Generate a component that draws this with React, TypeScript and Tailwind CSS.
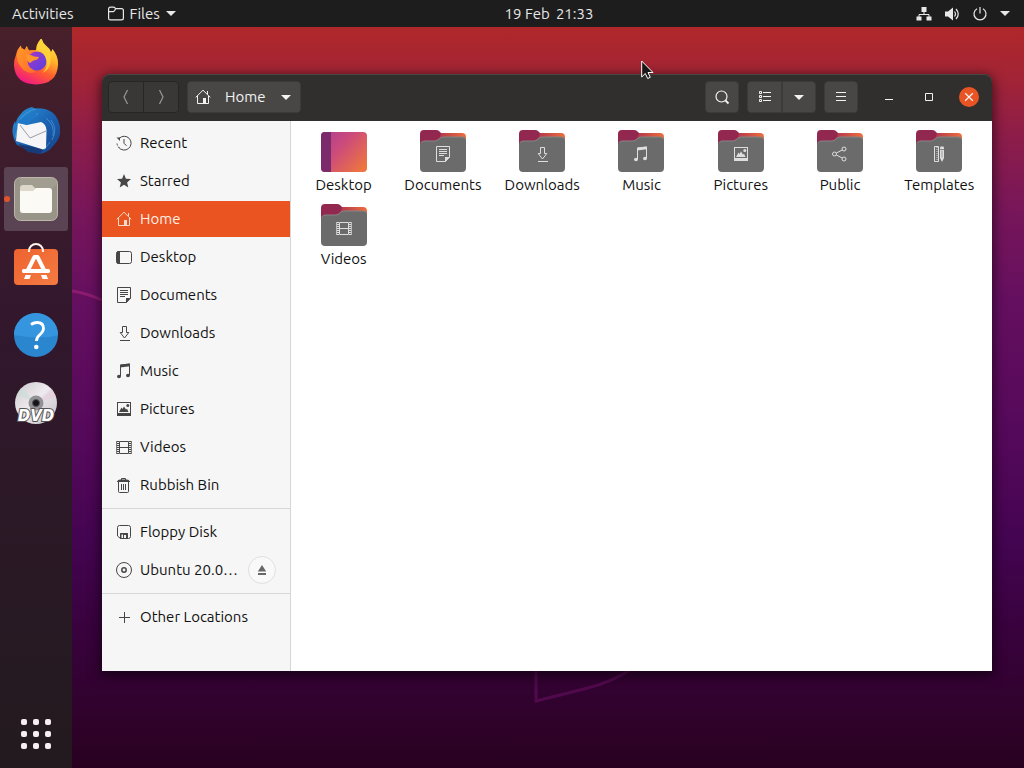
import React from "react";

type IconProps = { className?: string };

const stroke = {
  fill: "none",
  stroke: "currentColor",
  strokeWidth: 1,
} as const;

function Svg({ children, className = "h-4 w-4" }: { children: React.ReactNode; className?: string }) {
  return (
    <svg viewBox="0 0 16 16" className={`${className} shrink-0`} aria-hidden="true">
      {children}
    </svg>
  );
}

const RecentIcon = (p: IconProps) => (
  <Svg {...p}>
    <path {...stroke} d="M3.2 3.4A6.9 6.9 0 1 1 2.6 12.2" />
    <path {...stroke} strokeDasharray="2 1.5" d="M1 8.500a6.900 6.900 0 0 0 2.300 4.500" />
    <path {...stroke} d="M8 4v4.300l2.500 2.500" />
    <path fill="currentColor" d="M.5 2.500h3.500v3.500z" />
  </Svg>
);
const StarIcon = (p: IconProps) => (
  <Svg {...p}>
    <path fill="currentColor" d="M8 1l1.900 4.700 5.100.4-3.900 3.300 1.200 5L8 11.700l-4.300 2.700 1.200-5L1 6.100l5.100-.4z" />
  </Svg>
);
const HomeIcon = (p: IconProps) => (
  <Svg {...p}>
    <path {...stroke} d="M.7 8.400L8 1.200l7.300 7.200M2.500 7v7.500h11V7M12.500 5V2" />
    <path fill="currentColor" d="M8 9h3v6H8z" />
  </Svg>
);
const DesktopIcon = (p: IconProps) => (
  <Svg {...p}>
    <rect {...stroke} x=".5" y="2.500" width="15" height="12" rx="2" />
    <path fill="currentColor" d="M2.500 2H4v13H2.500a2 2 0 0 1-2-2V4a2 2 0 0 1 2-2z" />
  </Svg>
);
const DocumentIcon = (p: IconProps) => (
  <Svg {...p}>
    <path {...stroke} d="M1.500.5h13v10.500l-4 4.500h-9zM4 3.500h8M4 5.500h8M4 7.500h8M4 9.500h5" />
    <path fill="currentColor" d="M10 11h5l-5 5z" />
  </Svg>
);
const DownloadIcon = (p: IconProps) => (
  <Svg {...p}>
    <path {...stroke} d="M6.500 1.500h4v6h2.300L8.500 13 4.200 7.500h2.300zM4 15.500h10" />
  </Svg>
);
const MusicIcon = (p: IconProps) => (
  <Svg {...p}>
    <path {...stroke} d="M4.500 13V2l9-1V12" />
    <path fill="currentColor" d="M4 1.800L14 .5v2.800L4 4.600z" />
    <ellipse cx="3" cy="13.500" rx="2" ry="1.700" fill="currentColor" />
    <ellipse cx="12" cy="12.500" rx="2" ry="1.700" fill="currentColor" />
  </Svg>
);
const PictureIcon = (p: IconProps) => (
  <Svg {...p}>
    <rect {...stroke} x="1.500" y="1.500" width="13" height="13" />
    <path fill="currentColor" d="M1 12h14v3H1zM3 11l2.500-4.500 1 1.500L8 5.500l2 3 1-.8 1.500 3.300z" />
    <circle cx="11.800" cy="4.500" r="1.500" fill="currentColor" />
  </Svg>
);
const VideoIcon = (p: IconProps) => (
  <Svg {...p}>
    <path {...stroke} d="M3.500 2.500h9v12h-9zM3.500 8.500h9" />
    <path {...stroke} strokeWidth="2" strokeDasharray="1 1" d="M2 2v13M14 2v13" />
    <path {...stroke} strokeWidth=".8" d="M.6 2v13M15.400 2v13" />
  </Svg>
);
const TrashIcon = (p: IconProps) => (
  <Svg {...p}>
    <path {...stroke} d="M2.500 5v9.500a1 1 0 0 0 1 1h8a1 1 0 0 0 1-1V5M5.500 7v6M7.500 7v6M9.500 7v6M5.500 3V1.500h4V3" />
    <path fill="currentColor" d="M1 4.500Q2 2.500 4 2.500h7q2 0 3 2v.5H1z" />
  </Svg>
);
const FloppyIcon = (p: IconProps) => (
  <Svg {...p}>
    <path {...stroke} d="M3.500 1.500h9a2 2 0 0 1 2 2v9a2 2 0 0 1-2 2h-8l-3-2.500V3.500a2 2 0 0 1 2-2z" />
    <path fill="currentColor" d="M4 15V9.500Q4 9 4.500 9h7q.5 0 .5.500V15h-2v-4H8v4H7v-4.500H5.500V15z" />
  </Svg>
);
const DiscIcon = (p: IconProps) => (
  <Svg {...p}>
    <circle {...stroke} cx="8" cy="8" r="7.500" />
    <circle {...stroke} strokeWidth="1.500" cx="8" cy="8" r="2.200" />
  </Svg>
);
const PlusIcon = (p: IconProps) => (
  <Svg {...p}>
    <path {...stroke} d="M8.500 3v11M3 8.500h11" />
  </Svg>
);
const EjectIcon = (p: IconProps) => (
  <Svg {...p}>
    <path fill="currentColor" d="M8 3l4.200 6.500H3.800zM4 11h8v2H4z" />
  </Svg>
);
const ShareIcon = (p: IconProps) => (
  <Svg {...p}>
    <path {...stroke} d="M4.300 7l6-3M4.300 9l6 3" />
    <circle {...stroke} cx="2.500" cy="8" r="2" />
    <circle {...stroke} cx="12" cy="3" r="2" />
    <circle {...stroke} cx="12" cy="13" r="2" />
  </Svg>
);
const TemplateIcon = (p: IconProps) => (
  <Svg {...p}>
    <path {...stroke} d="M3.500.5h4v15h-4z" />
    <path {...stroke} strokeDasharray="1 1" d="M6 1v14" />
    <path fill="currentColor" d="M9 2l.5-1.500h3L13 2v1.200H9zM9 4h4v8l-2 4-2-4z" />
    <path stroke="#6b6b6b" strokeWidth=".6" d="M11 4.500v7" />
  </Svg>
);
const CaretIcon = ({ className = "h-[5px] w-2.5" }: IconProps) => (
  <svg viewBox="0 0 10 5" className={`${className} shrink-0`} aria-hidden="true">
    <path fill="currentColor" d="M0 0h10L5 5z" />
  </svg>
);

function Firefox() {
  return (
    <svg viewBox="0 0 48 48" className="h-12 w-12" aria-hidden="true">
      <defs>
        <linearGradient id="ffBody" x1=".8" y1="0" x2=".3" y2="1">
          <stop offset="0" stopColor="#fff04a" />
          <stop offset=".35" stopColor="#ffb52a" />
          <stop offset=".65" stopColor="#ff5c2f" />
          <stop offset="1" stopColor="#f01787" />
        </linearGradient>
        <linearGradient id="ffGlobe" x1="0" y1="0" x2="1" y2="1">
          <stop offset="0" stopColor="#a038c8" />
          <stop offset="1" stopColor="#5a3fe0" />
        </linearGradient>
        <linearGradient id="ffHead" x1="0" y1="0" x2="1" y2="1">
          <stop offset="0" stopColor="#ff9a28" />
          <stop offset="1" stopColor="#ff6b2d" />
        </linearGradient>
      </defs>
      <path
        fill="url(#ffBody)"
        d="M4 16Q5 10 9 6.500l1 5 3-1L14.500 7l2.500 4.500 7-.5q0-6 5.500-12 1 5 5 8 3.500 2.500 4.500 6l1.500-3q6 7 5.500 16-1 19-22 19.500Q3.500 45 2 27q-.3-6 2-11z"
      />
      <path
        fill="url(#ffHead)"
        d="M5 14l5-5 3 2 2-3.500 2 4.500q4-2 7 0l-5 8q-2 9 5 13-9 3-15-5-5-5-4-14z"
      />
      <circle cx="25" cy="22" r="9.500" fill="url(#ffGlobe)" />
      <path fill="#ff9629" d="M14 16q5-1 8 1.500l5 .5q-1 3-5.500 3.500L18 24q-4-2-4-8z" />
      <path fill="#ffd43b" d="M25 11q0-6 4.500-11 1 5 5 8 6 5 4 15-1 8-8 11 6-6 3.500-14-2-7-9-9z" opacity=".8" />
    </svg>
  );
}

function Thunderbird() {
  return (
    <svg viewBox="0 0 48 48" className="h-12 w-12" aria-hidden="true">
      <defs>
        <linearGradient id="tbBody" x1="0" y1="0" x2="1" y2="1">
          <stop offset="0" stopColor="#2a94d8" />
          <stop offset=".5" stopColor="#1c64b4" />
          <stop offset="1" stopColor="#173f87" />
        </linearGradient>
      </defs>
      <path
        fill="url(#tbBody)"
        d="M8 8Q13 1 20 0l3 1.500Q40 0 46 13q6 15-4 25-6 8-14 9L5 38Q-3 25 3 14l1 3q0-5 4-9z"
      />
      <path fill="none" stroke="#5cb7ec" opacity=".5" d="M5 16Q15 3 24 2M15 9l-5 10M26 6l-6 6M39 13q7 9 1 20M34 11q9 7 7 18M32 43l6-8M5 23l-2 8" />
      <path fill="#173b78" d="M6 37l26 5-4 5-12-2z" />
      <path fill="#f5f5f7" d="M6 15l9 3 14-3q5 2 5.500 8L34 41l-3 1.500L4 34z" />
      <path fill="none" stroke="#85888e" strokeWidth=".8" d="M8 18l10 13 16-7" />
      <path fill="#2078c8" d="M5 16Q13 5 28 9q-9 2-13 9-5-1-10-2z" />
    </svg>
  );
}

function FilesApp() {
  return (
    <svg viewBox="0 0 48 48" className="h-12 w-12" aria-hidden="true">
      <rect x="2.500" y="2.500" width="43" height="43" rx="6" fill="#999488" stroke="#bfb8aa" />
      <path fill="#aaa599" d="M8 3h32q5 0 5 6L8 40z" opacity=".5" />
      <path fill="#ddd7ca" d="M8 13q0-3 3-3h9l4 4h13q3 0 3 3v18H8z" />
      <path fill="#fbfaf4" d="M8 16h13l3-3h13q3 0 3 3v19q0 3-3 3H11q-3 0-3-3z" />
    </svg>
  );
}

function SoftwareApp() {
  return (
    <svg viewBox="0 0 48 48" className="h-12 w-12" aria-hidden="true">
      <defs>
        <linearGradient id="bag" x1="0" y1="0" x2="1" y2="1">
          <stop offset="0" stopColor="#ee632f" />
          <stop offset="1" stopColor="#f47b43" />
        </linearGradient>
      </defs>
      <rect x="2" y="6" width="44" height="36" rx="4" fill="url(#bag)" />
      <path fill="none" stroke="#fff4ec" strokeWidth="2" d="M17 9V8a7 7 0 0 1 14 0v1" />
      <path fill="none" stroke="#fff" strokeWidth="4" strokeLinejoin="round" d="M15.500 28l7-14h3l7 14" />
      <rect x="10" y="26" width="28" height="4" rx="1.500" fill="#fff" />
      <path fill="#fff" d="M13.500 32h5.500l-1.500 4h-5.500zM29 32h5.500l1.500 4h-5.500z" />
    </svg>
  );
}

function HelpApp() {
  return (
    <svg viewBox="0 0 48 48" className="h-12 w-12" aria-hidden="true">
      <circle cx="24" cy="24" r="22" fill="#2b86d0" />
      <path fill="#3595de" d="M2 24a22 22 0 0 1 44 0Q30 29 2 24z" />
      <path fill="none" stroke="#fff" strokeWidth="2.800" d="M19 13.500q3-2 6-2 6.500 0 6.500 6 0 3-3.500 6T24.500 30" />
      <circle cx="24.300" cy="36" r="2.300" fill="#fff" />
    </svg>
  );
}

function DvdApp() {
  return (
    <svg viewBox="0 0 48 48" className="h-12 w-12" aria-hidden="true">
      <defs>
        <linearGradient id="dvd" x1="0" y1="0" x2="1" y2="1">
          <stop offset="0" stopColor="#c9c9cb" />
          <stop offset=".45" stopColor="#eee9ee" />
          <stop offset="1" stopColor="#bfc0c4" />
        </linearGradient>
      </defs>
      <circle cx="24" cy="24" r="21" fill="url(#dvd)" />
      <path fill="#c8ddd8" d="M24 24L5 15l4-6z" opacity=".6" />
      <path fill="#e6c9dc" d="M24 24L40 10l4 8z" opacity=".6" />
      <circle cx="24" cy="24" r="7.500" fill="#929295" />
      <circle cx="24" cy="24" r="3.500" fill="#151316" stroke="#55555a" />
      <text
        x="24"
        y="42"
        textAnchor="middle"
        fontFamily="DejaVu Sans, sans-serif"
        fontSize="15"
        fontWeight="bold"
        fontStyle="italic"
        fill="#fff"
        stroke="#555"
        strokeWidth="2"
        paintOrder="stroke"
      >
        DVD
      </text>
    </svg>
  );
}

const apps = [
  { name: "Firefox", icon: Firefox },
  { name: "Thunderbird", icon: Thunderbird },
  { name: "Files", icon: FilesApp, active: true },
  { name: "Software", icon: SoftwareApp },
  { name: "Help", icon: HelpApp },
  { name: "Disc", icon: DvdApp },
];

const places = [
  { name: "Recent", icon: RecentIcon },
  { name: "Starred", icon: StarIcon },
  { name: "Home", icon: HomeIcon, selected: true },
  { name: "Desktop", icon: DesktopIcon },
  { name: "Documents", icon: DocumentIcon },
  { name: "Downloads", icon: DownloadIcon },
  { name: "Music", icon: MusicIcon },
  { name: "Pictures", icon: PictureIcon },
  { name: "Videos", icon: VideoIcon },
  { name: "Rubbish Bin", icon: TrashIcon },
];

const folders: { name: string; icon?: (p: IconProps) => React.ReactElement }[] = [
  { name: "Desktop" },
  { name: "Documents", icon: DocumentIcon },
  { name: "Downloads", icon: DownloadIcon },
  { name: "Music", icon: MusicIcon },
  { name: "Pictures", icon: PictureIcon },
  { name: "Public", icon: ShareIcon },
  { name: "Templates", icon: TemplateIcon },
  { name: "Videos", icon: VideoIcon },
];

function FolderArt({ icon: Icon }: { icon?: (p: IconProps) => React.ReactElement }) {
  if (!Icon) {
    return (
      <svg viewBox="0 0 48 48" className="h-12 w-12" aria-hidden="true">
        <defs>
          <linearGradient id="desk" x1="0" y1="0" x2="1" y2=".8">
            <stop offset="0" stopColor="#ad3b92" />
            <stop offset=".45" stopColor="#cc4c7a" />
            <stop offset="1" stopColor="#ee7440" />
          </linearGradient>
        </defs>
        <rect x="1" y="4" width="46" height="40" rx="4" fill="url(#desk)" />
        <path fill="#7b2b6b" d="M5 4h6v40H5a4 4 0 0 1-4-4V8a4 4 0 0 1 4-4z" />
      </svg>
    );
  }
  return (
    <span className="grid h-12 w-12 place-items-center">
      <svg viewBox="0 0 48 48" className="col-start-1 row-start-1 h-12 w-12" aria-hidden="true">
        <defs>
          <linearGradient id="tab" x1="0" y1="0" x2="1" y2="0">
            <stop offset="0" stopColor="#932a55" />
            <stop offset=".45" stopColor="#b53a4c" />
            <stop offset="1" stopColor="#ee6e3c" />
          </linearGradient>
        </defs>
        <path fill="url(#tab)" d="M1 20V9q0-4 4-4h38q4 0 4 4v11z" />
        <path fill="#922750" d="M1 20V6q0-4 4-4h12q2 0 3 1l2 2q-1 6-5 7z" />
        <path fill="#6b6b6b" d="M1 17q0-4 4-4h11q2 0 4-2t4-2h19q4 0 4 4v27q0 4-4 4H5q-4 0-4-4z" />
        <path fill="none" stroke="#858585" d="M2 15q1-2 3-2h11q2 0 4-2t4-2h19q3 0 3.500 2" />
      </svg>
      <span className="col-start-1 row-start-1 pt-1 text-[#dedede]">
        <Icon />
      </span>
    </span>
  );
}

function TopBar() {
  return (
    <header className="grid h-[27px] shrink-0 grid-cols-[1fr_auto_1fr] items-center bg-[#1d1d1d] text-[15px] leading-5 text-[#e8e8e8]">
      <div className="flex items-center gap-[34px] pl-3">
        <button type="button">Activities</button>
        <button type="button" className="flex items-center gap-1.5">
          <Svg>
            <path {...stroke} strokeWidth="1.200" d="M.6 4V3q0-1.900 1.900-1.900h3q1.500 0 2 1.500h6q1.900 0 1.900 1.900v7.500q0 1.900-1.900 1.900h-11Q.6 13.900.6 12zM.6 5.600h4.500q1.500 0 2.400-3" />
          </Svg>
          Files
          <CaretIcon />
        </button>
      </div>
      <button type="button" className="flex gap-1.5 pl-[74px]">
        <span>19 Feb</span>
        <span>21:33</span>
      </button>
      <button type="button" aria-label="System menu" className="flex items-center justify-end gap-3 pr-3.5">
        <Svg>
          <path {...stroke} d="M8 6v3M3 12V8.500h10V12" />
          <path fill="currentColor" d="M5.500 1h5v5h-5zM.5 10.500h5v4h-5zM10.500 10.500h5v4h-5z" />
        </Svg>
        <Svg>
          <path fill="currentColor" d="M1 5.500h3L9 1.500v13L4 10.500H1z" />
          <path {...stroke} strokeWidth="1.200" d="M10.500 5.500q2 2.500 0 5M12 3q4.500 5 0 10" />
        </Svg>
        <Svg>
          <path {...stroke} strokeWidth="1.200" d="M5 2.700a6 6 0 1 0 6 0M8 1v6.500" />
        </Svg>
        <CaretIcon />
      </button>
    </header>
  );
}

function Dock() {
  return (
    <nav className="flex w-[72px] shrink-0 flex-col items-center gap-1 bg-linear-to-b from-[#47202a] via-[#32172d] via-40% to-[#221a1e] pt-1 pb-0.5">
      {apps.map(({ name, icon: Icon, active }) => (
        <button
          key={name}
          type="button"
          aria-label={name}
          className={`relative grid h-16 w-16 place-items-center rounded-[3px] ${active ? "bg-[#5a4353]" : ""}`}
        >
          {active && <span className="absolute left-0 h-1.5 w-1.5 rounded-full bg-[#e2532c]" />}
          <Icon />
        </button>
      ))}
      <button type="button" aria-label="Show applications" className="mt-auto grid h-16 w-16 place-items-center">
        <span className="grid grid-cols-3 gap-1.5">
          {Array.from({ length: 9 }, (_, i) => (
            <span key={i} className="h-1.5 w-1.5 rounded-[2px] bg-[#f8edf4]" />
          ))}
        </span>
      </button>
    </nav>
  );
}

function HeaderBar() {
  const raised = "grid h-8 place-items-center border border-[#3c3b39] bg-[#484745]";
  return (
    <div className="flex h-[47px] shrink-0 items-center gap-2 rounded-t-lg bg-[#312f2e] pr-[13px] pb-px pl-1.5 text-[#f2f2f2] shadow-[inset_0_1px_#4a4644]">
      <div className="flex rounded border border-[#282625] bg-[#393836] text-[#999896]">
        <button type="button" aria-label="Back" className="grid h-[30px] w-[35px] place-items-center border-r border-[#282625]">
          <Svg>
            <path {...stroke} strokeWidth="1.200" d="M9.500 1L6 8l3.500 7" />
          </Svg>
        </button>
        <button type="button" aria-label="Forward" className="grid h-[30px] w-[34px] place-items-center">
          <Svg>
            <path {...stroke} strokeWidth="1.200" d="M6.500 1L10 8l-3.500 7" />
          </Svg>
        </button>
      </div>
      <button type="button" className="flex h-8 items-center rounded border border-[#3c3b39] bg-[#484745] px-[7px] text-[15px] leading-5">
        <HomeIcon />
        <span className="pr-4 pl-3.5">Home</span>
        <CaretIcon className="mr-0.5 h-[5px] w-2.5" />
      </button>
      <div className="flex-1" />
      <button type="button" aria-label="Search" className={`${raised} w-[34px] rounded`}>
        <Svg>
          <circle {...stroke} strokeWidth="1.200" cx="7.500" cy="7.500" r="5.500" />
          <path {...stroke} strokeWidth="1.800" d="M11.500 11.500l3 3" />
        </Svg>
      </button>
      <div className="flex">
        <button type="button" aria-label="List view" className={`${raised} w-[35px] rounded-l`}>
          <Svg>
            <path {...stroke} d="M6 3.500h8M6 7.500h8M6 11.500h8" />
            <path {...stroke} d="M2.500 2.500h2v2h-2zM2.500 6.500h2v2h-2zM2.500 10.500h2v2h-2z" />
          </Svg>
        </button>
        <button type="button" aria-label="View options" className={`${raised} w-[34px] rounded-r`}>
          <CaretIcon />
        </button>
      </div>
      <button type="button" aria-label="Menu" className={`${raised} w-[34px] rounded`}>
        <Svg>
          <path {...stroke} d="M3 3.500h10M3 7.500h10M3 11.500h10" />
        </Svg>
      </button>
      <div className="ml-[13px] flex items-center gap-5">
        <button type="button" aria-label="Minimize" className="grid h-5 w-5 place-items-center">
          <Svg>
            <path {...stroke} d="M4 10.500h8" />
          </Svg>
        </button>
        <button type="button" aria-label="Maximize" className="grid h-5 w-5 place-items-center">
          <Svg>
            <path {...stroke} d="M4.500 4.500h7v7h-7z" />
          </Svg>
        </button>
        <button type="button" aria-label="Close" className="grid h-5 w-5 place-items-center rounded-full bg-[#e95425]">
          <Svg>
            <path {...stroke} strokeWidth="1.300" d="M4.200 4.200l7.600 7.600M11.800 4.200l-7.600 7.600" />
          </Svg>
        </button>
      </div>
    </div>
  );
}

const rowClass = "flex h-9 w-full items-center gap-2 pl-3.5 text-left";

function Sidebar() {
  return (
    <aside className="flex w-[189px] shrink-0 flex-col gap-0.5 border-r border-[#d6d6d6] bg-[#f6f6f6] pt-1 text-[#111]">
      {places.map(({ name, icon: Icon, selected }) => (
        <button key={name} type="button" className={`${rowClass} ${selected ? "bg-[#e95420] text-[#fdeee6]" : ""}`}>
          <span className={selected ? "text-[#fbd9c8]" : "text-[#464646]"}>
            <Icon />
          </span>
          {name}
        </button>
      ))}
      <hr className="my-[3px] border-[#d6d6d6]" />
      <button type="button" className={rowClass}>
        <span className="text-[#464646]">
          <FloppyIcon />
        </span>
        Floppy Disk
      </button>
      <div className="flex items-center pr-3.5">
        <button type="button" className={`${rowClass} min-w-0 flex-1`}>
          <span className="text-[#464646]">
            <DiscIcon />
          </span>
          <span className="whitespace-nowrap">Ubuntu 20.0…</span>
        </button>
        <button
          type="button"
          aria-label="Eject"
          className="ml-2 grid h-7 w-7 shrink-0 place-items-center rounded-full border border-[#e0e0e0] bg-[#f9f9f9] text-[#686868]"
        >
          <EjectIcon />
        </button>
      </div>
      <hr className="my-[3px] border-[#d6d6d6]" />
      <button type="button" className={rowClass}>
        <span className="text-[#464646]">
          <PlusIcon />
        </span>
        Other Locations
      </button>
    </aside>
  );
}

function FilesWindow() {
  return (
    <section
      aria-label="Home"
      className="relative flex flex-1 flex-col rounded-t-lg text-[15px] leading-[18px] shadow-[0_3px_12px_2px_rgba(0,0,0,0.55)]"
    >
      <HeaderBar />
      <div className="flex flex-1">
        <Sidebar />
        <main className="grid flex-1 grid-cols-[repeat(auto-fill,minmax(96px,1fr))] content-start gap-y-2 bg-white px-[3px] pt-[7px] text-[#111]">
          {folders.map(({ name, icon }) => (
            <button key={name} type="button" className="flex flex-col items-center">
              <FolderArt icon={icon} />
              <span>{name}</span>
            </button>
          ))}
        </main>
      </div>
    </section>
  );
}

export default function App() {
  return (
    <div className="relative flex h-screen flex-col overflow-hidden font-['Ubuntu','Noto_Sans',sans-serif]">
      <TopBar />
      <div className="flex min-h-0 flex-1">
        <Dock />
        <div className="relative flex flex-1 bg-[linear-gradient(to_bottom,#b0282a_0%,#a22436_7%,#8c1d4a_15%,#77165a_25%,#650f60_37%,#530859_57%,#430450_70%,#38023c_82%,#2e0228_95%,#280120_100%)] pt-[47px] pr-8 pb-[97px] pl-[30px]">
          <svg
            viewBox="0 0 952 741"
            preserveAspectRatio="xMinYMin slice"
            className="absolute inset-0 h-full w-full"
            aria-hidden="true"
          >
            <path fill="none" stroke="#a3257c" strokeWidth="3" opacity=".6" d="M0 264q14 2 30 9" />
            <path fill="none" stroke="#5c0e58" strokeWidth="3" opacity=".7" d="M464 640v34l48-12q30-7 50-22" />
          </svg>
          <FilesWindow />
        </div>
      </div>
      <svg viewBox="0 0 13 20" className="absolute top-[60px] left-[641px] h-5 w-[13px]" aria-hidden="true">
        <path fill="#171717" stroke="#fff" d="M.7 1v16l3.600-3.500 2.400 5 2.600-1.200-2.300-4.800h5z" />
      </svg>
    </div>
  );
}
